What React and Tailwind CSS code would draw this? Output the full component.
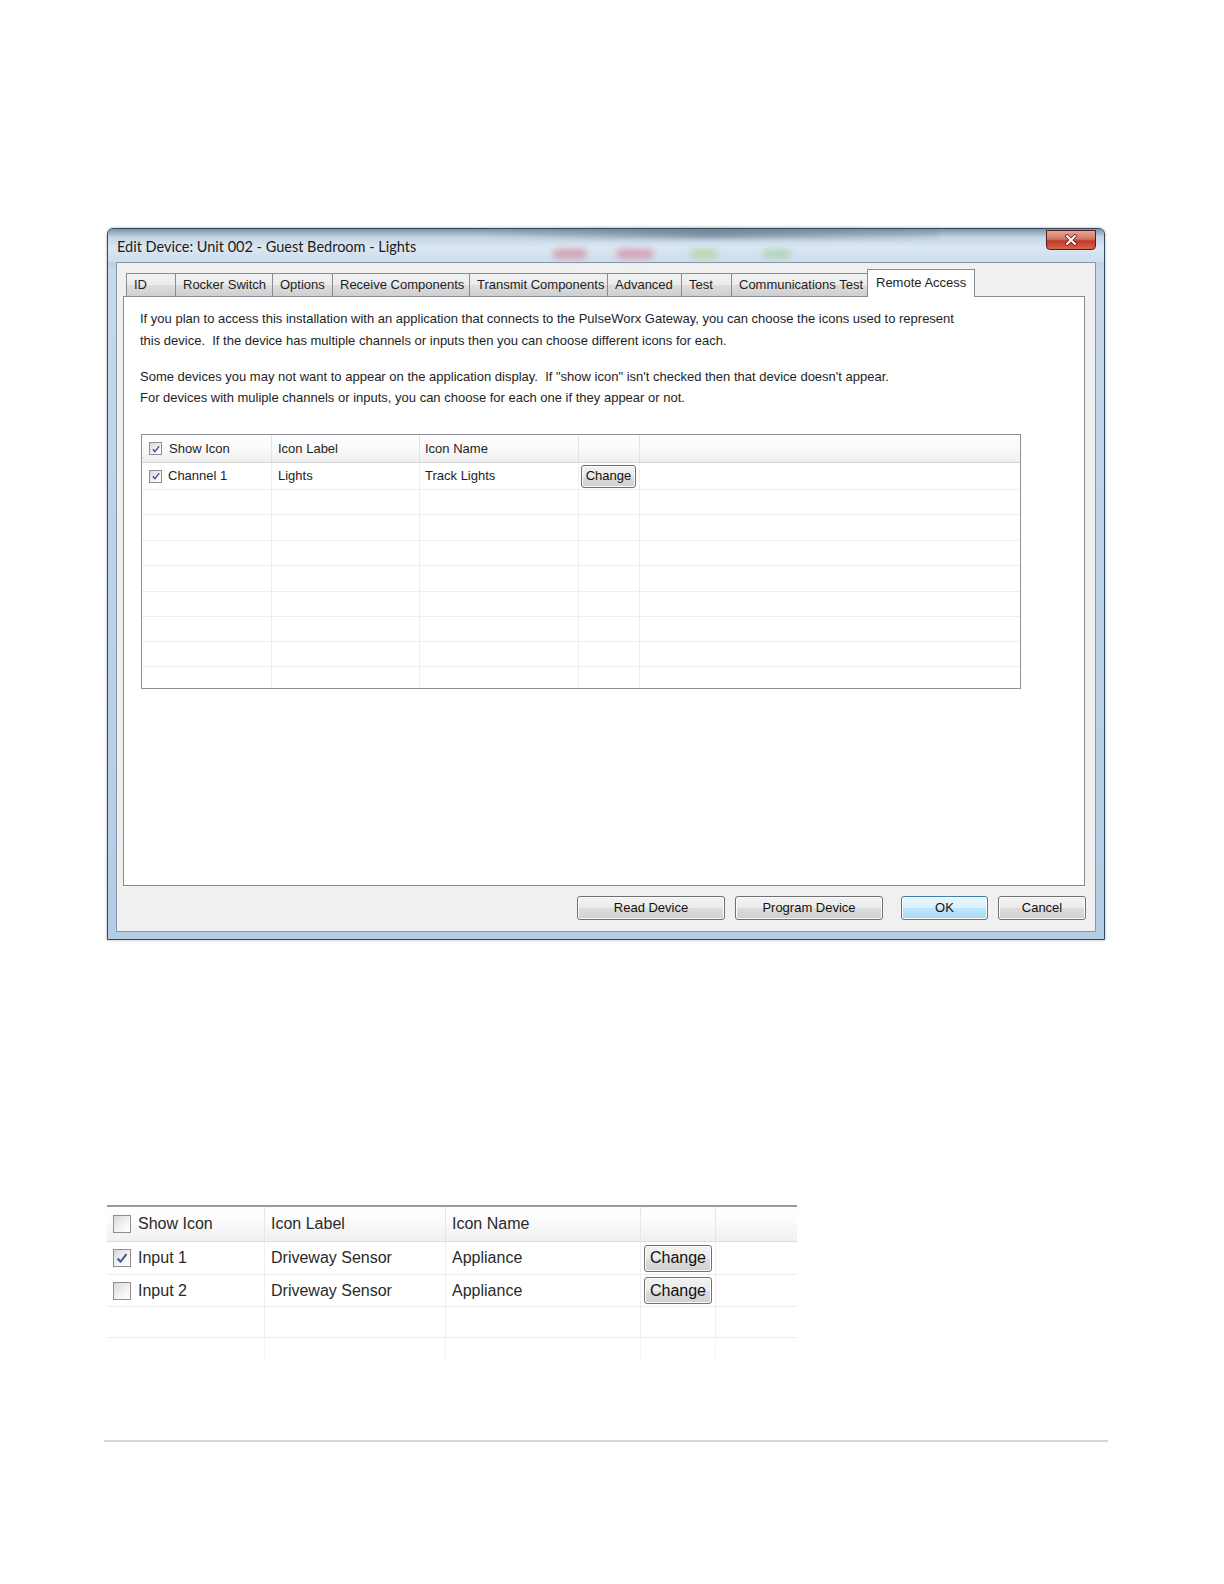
import React from 'react';

const TABS = [
  ['ID', 49],
  ['Rocker Switch', 97],
  ['Options', 60],
  ['Receive Components', 137],
  ['Transmit Components', 138],
  ['Advanced', 74],
  ['Test', 50],
  ['Communications Test', 136],
];

const GRID_ROWS = [25, 26, 25, 26, 25, 25, 25];

const CheckMark = ({ big }) => (
  <svg viewBox="0 0 12 12" className={big ? 'w-[14px] h-[14px]' : 'w-[10px] h-[10px]'}>
    <path d="M2.2 6.4 L4.8 9.2 L9.8 2.6" fill="none" stroke="#3f5488" strokeWidth="1.7" strokeLinejoin="round" />
  </svg>
);

const Check = ({ checked, big }) => (
  <span
    className={`inline-flex items-center justify-center flex-shrink-0 border border-[#8f8f8f] bg-[linear-gradient(135deg,#d8d8d8,#f4f4f4_60%,#ffffff)] ${
      big ? 'w-[18px] h-[18px]' : 'w-[13px] h-[13px]'
    }`}
  >
    {checked && <CheckMark big={big} />}
  </span>
);

const WinButton = ({ children, className = '', primary }) => (
  <div
    className={`flex items-center justify-center rounded-[3px] border ${
      primary
        ? 'border-[#3c7fb1] bg-[linear-gradient(to_bottom,#eaf6fd,#d9f0fc_50%,#bee6fd_51%,#a7d9f5)] shadow-[inset_0_0_0_1px_#ffffff]'
        : 'border-[#707070] bg-[linear-gradient(to_bottom,#f2f2f2,#ebebeb_50%,#dddddd_51%,#cfcfcf)] shadow-[inset_0_0_0_1px_#fcfcfc]'
    } text-[#111] ${className}`}
  >
    {children}
  </div>
);

const CloseButton = () => (
  <div className="absolute right-[8px] top-[1px] w-[50px] h-[20px] rounded-b-[4px] border border-[#4d1f1f] bg-[linear-gradient(to_bottom,#e8a493,#d27764_45%,#c0392b_55%,#d9624a)] flex items-center justify-center">
    <svg viewBox="0 0 14 12" className="w-[14px] h-[12px]">
      <path d="M3 2 L11 10 M11 2 L3 10" stroke="#5a2020" strokeWidth="3.6" strokeLinecap="round" />
      <path d="M3 2 L11 10 M11 2 L3 10" stroke="#ffffff" strokeWidth="2" strokeLinecap="round" />
    </svg>
  </div>
);

const Dialog = () => (
  <div className="w-[998px] h-[712px] flex flex-col rounded-t-[6px] border border-[#34495e] bg-[linear-gradient(to_bottom,#9fb6cc,#c7d9ea_6%,#bcd3e9_40%,#b5cde4)] px-[8px] pb-[7px] shadow-[0_0_3px_rgba(0,0,0,0.35)]">
    {/* Title bar */}
    <div className="relative h-[33px] flex-shrink-0 -mx-[8px] px-[9px] rounded-t-[6px] bg-[linear-gradient(to_bottom,#7f93a6,#c4d5e6_25%,#dbe7f2_55%,#cddded)]">
      <div className="absolute left-[370px] top-[0px] w-[460px] h-[10px] blur-[2px] bg-[linear-gradient(to_right,rgba(70,90,110,0),rgba(70,90,110,0.45),rgba(70,90,110,0.1))]" />
      <div className="absolute left-[445px] top-[20px] w-[34px] h-[10px] rounded-full blur-[3px] bg-[#d48a9c] opacity-70" />
      <div className="absolute left-[508px] top-[20px] w-[38px] h-[10px] rounded-full blur-[3px] bg-[#d48a9c] opacity-70" />
      <div className="absolute left-[582px] top-[20px] w-[28px] h-[10px] rounded-full blur-[3px] bg-[#add59a] opacity-70" />
      <div className="absolute left-[655px] top-[20px] w-[28px] h-[10px] rounded-full blur-[3px] bg-[#a0cc98] opacity-60" />
      <span className="relative block pt-[7px] text-[14.5px] text-[#1b1b1b] font-['Lato','Liberation_Sans',sans-serif]">
        Edit Device: Unit 002 - Guest Bedroom - Lights
      </span>
      <CloseButton />
    </div>

    {/* Client area */}
    <div className="flex-1 flex flex-col bg-[#f0f0f0] border border-[#8496aa] pl-[6px] pt-[6px]">
      {/* Tabs */}
      <div className="flex items-end h-[27px] pl-[3px]">
        {TABS.map(([label, w]) => (
          <div
            key={label}
            className="h-[23px] flex items-center pl-[7px] border-t border-l border-[#898c95] bg-[linear-gradient(to_bottom,#f2f2f2,#ebebeb_50%,#dddddd_51%,#cfcfcf)] whitespace-nowrap"
            style={{ width: w }}
          >
            {label}
          </div>
        ))}
        <div className="relative z-10 -mb-[1px] w-[108px] h-[28px] flex items-center pl-[8px] pb-[2px] border-t border-l border-r border-[#898c95] bg-white whitespace-nowrap">
          Remote Access
        </div>
      </div>

      {/* Tab panel */}
      <div className="w-[962px] h-[590px] bg-white border border-[#898c95] pl-[16px] pt-[11px]">
        <p className="leading-[22px] text-[13px]">
          If you plan to access this installation with an application that connects to the PulseWorx Gateway, you can choose the icons used to represent
          <br />
          this device.&nbsp; If the device has multiple channels or inputs then you can choose different icons for each.
        </p>
        <p className="mt-[14px] leading-[21px] text-[13px]">
          Some devices you may not want to appear on the application display.&nbsp; If "show icon" isn't checked then that device doesn't appear.
          <br />
          For devices with muliple channels or inputs, you can choose for each one if they appear or not.
        </p>

        {/* Grid */}
        <div className="mt-[26px] ml-[1px] w-[880px] h-[255px] border border-[#8c8f96] flex flex-col">
          <div className="h-[28px] flex border-b border-[#d5d5d5] bg-[linear-gradient(to_bottom,#ffffff,#fafafa_45%,#efefef)]">
            <div className="w-[130px] flex items-center gap-[7px] pl-[7px] border-r border-[#e2e2e2]">
              <Check checked />
              <span>Show Icon</span>
            </div>
            <div className="w-[148px] flex items-center pl-[6px] border-r border-[#e2e2e2]">Icon Label</div>
            <div className="w-[159px] flex items-center pl-[5px] border-r border-[#e2e2e2]">Icon Name</div>
            <div className="w-[61px] border-r border-[#e2e2e2]" />
            <div className="flex-1" />
          </div>
          <div className="h-[27px] flex border-b border-[#eeeeee]">
            <div className="w-[130px] flex items-center gap-[6px] pl-[7px] border-r border-[#eeeeee]">
              <Check checked />
              <span>Channel 1</span>
            </div>
            <div className="w-[148px] flex items-center pl-[6px] border-r border-[#eeeeee]">Lights</div>
            <div className="w-[159px] flex items-center pl-[5px] border-r border-[#eeeeee]">Track Lights</div>
            <div className="w-[61px] flex items-center pl-[2px] border-r border-[#eeeeee]">
              <WinButton className="w-[55px] h-[23px]">Change</WinButton>
            </div>
            <div className="flex-1" />
          </div>
          {GRID_ROWS.map((h, i) => (
            <div key={i} className="flex border-b border-[#eeeeee]" style={{ height: h }}>
              <div className="w-[130px] border-r border-[#eeeeee]" />
              <div className="w-[148px] border-r border-[#eeeeee]" />
              <div className="w-[159px] border-r border-[#eeeeee]" />
              <div className="w-[61px] border-r border-[#eeeeee]" />
              <div className="flex-1" />
            </div>
          ))}
          <div className="flex-1 flex">
            <div className="w-[130px] border-r border-[#eeeeee]" />
            <div className="w-[148px] border-r border-[#eeeeee]" />
            <div className="w-[159px] border-r border-[#eeeeee]" />
            <div className="w-[61px] border-r border-[#eeeeee]" />
            <div className="flex-1" />
          </div>
        </div>
      </div>

      {/* Bottom buttons */}
      <div className="w-[963px] flex justify-end mt-[10px]">
        <WinButton className="w-[148px] h-[24px]">Read Device</WinButton>
        <WinButton className="w-[148px] h-[24px] ml-[10px]">Program Device</WinButton>
        <WinButton primary className="w-[87px] h-[24px] ml-[18px]">OK</WinButton>
        <WinButton className="w-[88px] h-[24px] ml-[10px]">Cancel</WinButton>
      </div>
    </div>
  </div>
);

const BigRow = ({ h, children }) => (
  <div className="flex border-b border-[#ececec]" style={{ height: h }}>
    {children}
  </div>
);

const SecondTable = () => (
  <div className="w-[690px] text-[16px] text-[#2a2a2a]">
    <div className="border-t-2 border-[#9a9a9a]" />
    <div className="h-[35px] flex border-b border-[#dcdcdc] bg-[linear-gradient(to_bottom,#ffffff,#fbfbfb_40%,#f0f0f0)]">
      <div className="w-[158px] flex items-center gap-[7px] pl-[6px] border-r border-[#e6e6e6]">
        <Check big />
        <span>Show Icon</span>
      </div>
      <div className="w-[181px] flex items-center pl-[6px] border-r border-[#e6e6e6]">Icon Label</div>
      <div className="w-[195px] flex items-center pl-[6px] border-r border-[#e6e6e6]">Icon Name</div>
      <div className="w-[75px] border-r border-[#e6e6e6]" />
      <div className="flex-1" />
    </div>
    {[
      ['Input 1', true],
      ['Input 2', false],
    ].map(([name, checked], i) => (
      <BigRow key={name} h={i === 0 ? 33 : 32}>
        <div className="w-[158px] flex items-center gap-[7px] pl-[6px] border-r border-[#f0f0f0]">
          <Check big checked={checked} />
          <span>{name}</span>
        </div>
        <div className="w-[181px] flex items-center pl-[6px] border-r border-[#f0f0f0]">Driveway Sensor</div>
        <div className="w-[195px] flex items-center pl-[6px] border-r border-[#f0f0f0]">Appliance</div>
        <div className="w-[75px] flex items-center pl-[3px] border-r border-[#f0f0f0]">
          <WinButton className="w-[68px] h-[27px]">Change</WinButton>
        </div>
        <div className="flex-1" />
      </BigRow>
    ))}
    <BigRow h={31}>
      <div className="w-[158px] border-r border-[#f0f0f0]" />
      <div className="w-[181px] border-r border-[#f0f0f0]" />
      <div className="w-[195px] border-r border-[#f0f0f0]" />
      <div className="w-[75px] border-r border-[#f0f0f0]" />
      <div className="flex-1" />
    </BigRow>
    <div className="h-[22px] flex">
      <div className="w-[158px] border-r border-[#f4f4f4]" />
      <div className="w-[181px] border-r border-[#f4f4f4]" />
      <div className="w-[195px] border-r border-[#f4f4f4]" />
      <div className="w-[75px] border-r border-[#f4f4f4]" />
      <div className="flex-1" />
    </div>
  </div>
);

export default function App() {
  return (
    <div className="w-[1224px] h-[1584px] bg-white text-[13px] text-[#1e1e1e] font-['Liberation_Sans',Arial,sans-serif]">
      <div className="pt-[228px] pl-[107px]">
        <Dialog />
      </div>
      <div className="pt-[265px] pl-[107px]">
        <SecondTable />
      </div>
      <div className="mt-[80px] ml-[104px] w-[1004px] h-[2px] bg-[#d6d6d6]" />
    </div>
  );
}
